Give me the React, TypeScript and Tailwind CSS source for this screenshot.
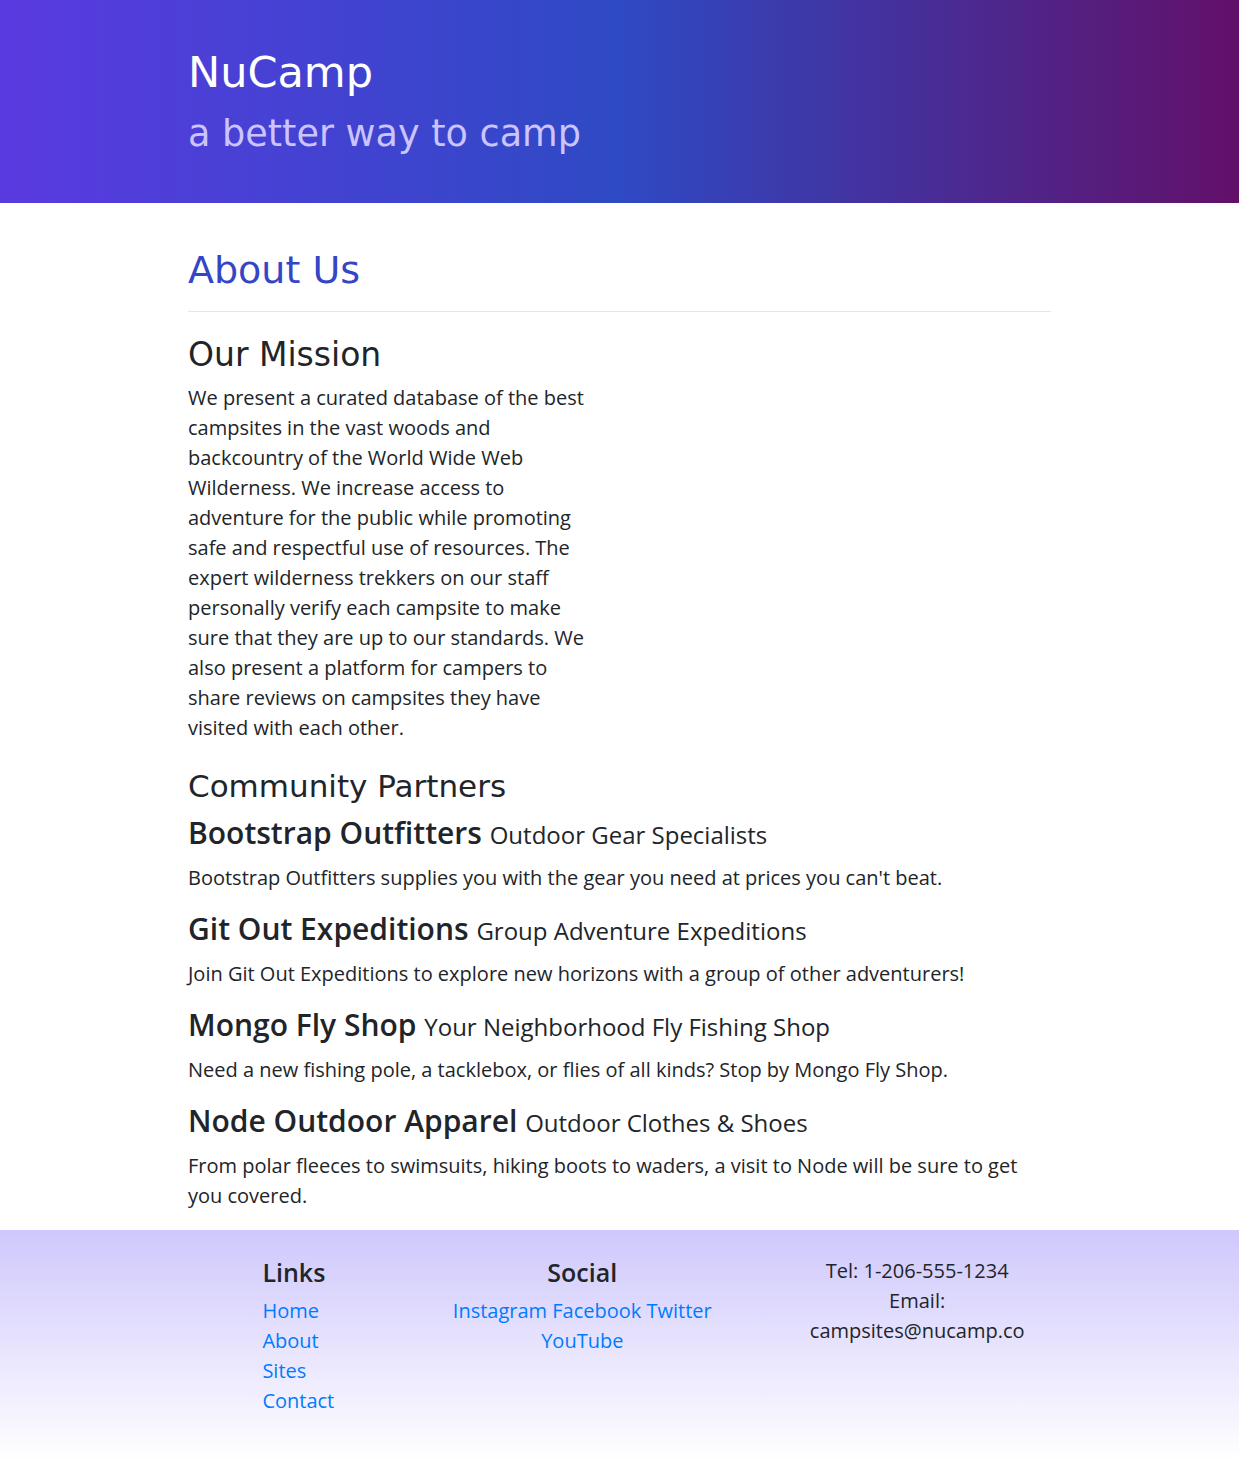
import React from "react";

const partners = [
  {
    name: "Bootstrap Outfitters",
    tag: "Outdoor Gear Specialists",
    text: "Bootstrap Outfitters supplies you with the gear you need at prices you can't beat.",
  },
  {
    name: "Git Out Expeditions",
    tag: "Group Adventure Expeditions",
    text: "Join Git Out Expeditions to explore new horizons with a group of other adventurers!",
  },
  {
    name: "Mongo Fly Shop",
    tag: "Your Neighborhood Fly Fishing Shop",
    text: "Need a new fishing pole, a tacklebox, or flies of all kinds? Stop by Mongo Fly Shop.",
  },
  {
    name: "Node Outdoor Apparel",
    tag: "Outdoor Clothes & Shoes",
    text: "From polar fleeces to swimsuits, hiking boots to waders, a visit to Node will be sure to get you covered.",
  },
];

export default function App() {
  return (
    <div className="min-h-[1460px] flex flex-col bg-white font-['Open_Sans',sans-serif] text-[#212529]">
      <header className="h-[203px] bg-[linear-gradient(to_right,#5a3ae0_0%,#2e4ac4_50%,#621069_100%)]">
        <div className="mx-auto w-[893px] px-[15px] pt-[42px]">
          <h1 className="font-['Comic_Sans_MS','DejaVu_Sans',sans-serif] text-[43px] leading-[60px] text-white">
            NuCamp
          </h1>
          <h2 className="mt-[7px] font-['Comic_Sans_MS','DejaVu_Sans',sans-serif] text-[36.6px] leading-[50px] text-[#cbc4ff]">
            a better way to camp
          </h2>
        </div>
      </header>

      <main className="mx-auto w-[893px] px-[15px] pt-[42px] pb-[19px]">
        <h2 className="font-['Comic_Sans_MS','DejaVu_Sans',sans-serif] text-[38px] leading-[50px] text-[#3446c6]">
          About Us
        </h2>
        <hr className="mt-[16px] border-0 border-t border-[#e6e6e6]" />

        <h3 className="mt-[23px] font-['Comic_Sans_MS','DejaVu_Sans',sans-serif] text-[33px] leading-[40px] text-[#212529]">
          Our Mission
        </h3>
        <p className="mt-[8px] w-[402px] text-[20px] leading-[30px]">
          We present a curated database of the best campsites in the vast woods and backcountry of the
          World Wide Web Wilderness. We increase access to adventure for the public while promoting safe
          and respectful use of resources. The expert wilderness trekkers on our staff personally verify
          each campsite to make sure that they are up to our standards. We also present a platform for
          campers to share reviews on campsites they have visited with each other.
        </p>

        <h3 className="mt-[23px] font-['Comic_Sans_MS','DejaVu_Sans',sans-serif] text-[31px] leading-[40px] text-[#212529]">
          Community Partners
        </h3>
        <div className="mt-[9px] flex flex-col gap-[18px]">
          {partners.map((p) => (
            <div key={p.name}>
              <h4 className="text-[30px] leading-[36px] font-semibold text-[#212529]">
                {p.name} <small className="text-[24px] font-normal">{p.tag}</small>
              </h4>
              <p className="mt-[10px] text-[20px] leading-[30px]">{p.text}</p>
            </div>
          ))}
        </div>
      </main>

      <footer className="flex-1 bg-[linear-gradient(to_bottom,#cfc8fc,#ffffff)] pt-[27px] pb-[45px]">
        <div className="mx-auto w-[893px] grid grid-cols-12">
          <div className="col-span-2 col-start-2 px-[15px]">
            <h5 className="text-[25px] leading-[30px] font-semibold text-[#212529]">Links</h5>
            <ul className="mt-[9px] text-[20px] leading-[30px] text-[#007bff]">
              <li>Home</li>
              <li>About</li>
              <li>Sites</li>
              <li>Contact</li>
            </ul>
          </div>
          <div className="col-span-5 px-[15px] text-center">
            <h5 className="text-[25px] leading-[30px] font-semibold text-[#212529]">Social</h5>
            <p className="mt-[9px] text-[20px] leading-[30px] text-[#007bff]">
              Instagram Facebook Twitter
              <br />
              YouTube
            </p>
          </div>
          <div className="col-span-4 px-[15px] text-center text-[20px] leading-[30px] text-[#212529]">
            <p className="-mt-px">
              Tel: 1-206-555-1234
              <br />
              Email:
              <br />
              campsites@nucamp.co
            </p>
          </div>
        </div>
      </footer>
    </div>
  );
}
